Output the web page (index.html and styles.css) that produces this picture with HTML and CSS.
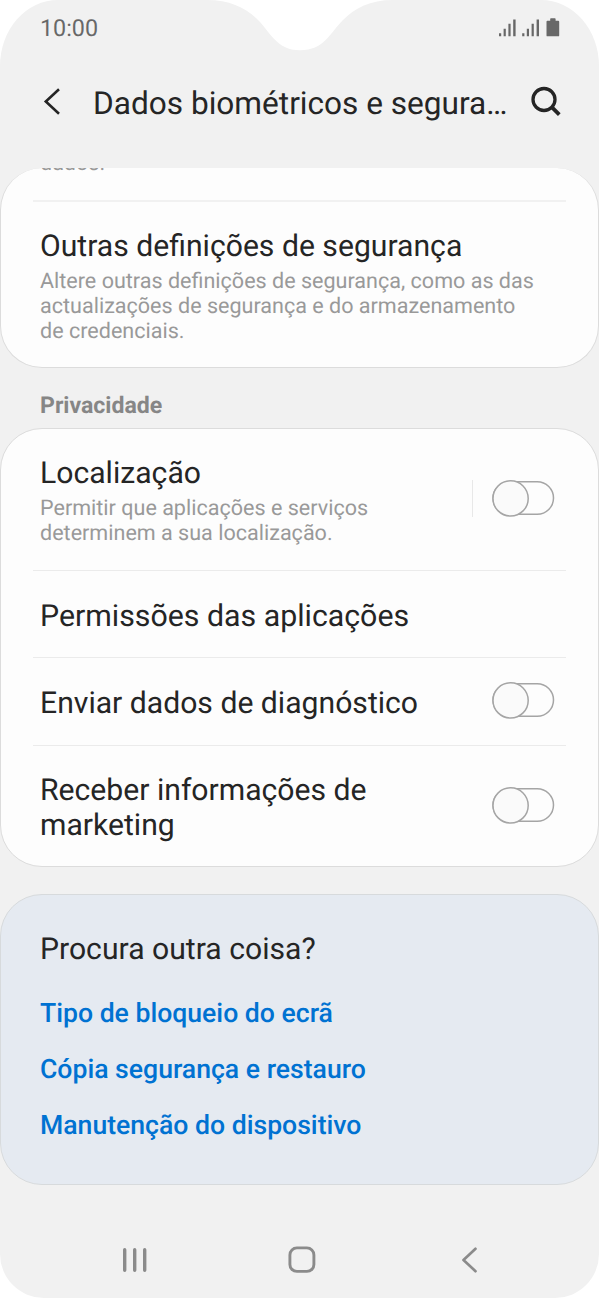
FILE: index.html
```html
<!DOCTYPE html>
<html lang="pt">
<head>
<meta charset="utf-8">
<title>Dados biométricos e segurança</title>
<link rel="stylesheet" href="styles.css">
</head>
<body>
<div class="phone">
  <svg class="notch" width="190" height="52" viewBox="0 0 190 52"><path d="M0 0C22 0 37 7 49 18C63 31 69 50.300 93 50.300C117 50.300 123 33 136 20C148 8 163 0 186 0Z" fill="#fff"/></svg>
  <div class="status">
    <span class="clock">10:00</span>
    <svg class="signals" width="62" height="20" viewBox="0 0 62 20" fill="#686868">
      <path d="M0 15.200h2.200v3H0zM4.600 10.700h2.200v7.500h-2.200zM9.400 5.800h2.200v12.400h-2.200zM14.200 1.400h2.400v16.800h-2.400zM23.200 15.200h2.200v3h-2.200zM27.800 10.700h2.200v7.500h-2.200zM32.600 5.800h2.200v12.400h-2.200zM37.600 1.400h2.400v16.800h-2.400z"/>
      <path d="M48.400 2.800h2.800V1q0-.7.7-.7h4q.7 0 .7.7v1.800h2.700q.9 0 .9.9v13.700q0 .9-.9.9H48.400q-.9 0-.9-.9V3.700q0-.9.9-.9z"/>
    </svg>
  </div>
  <header class="header">
    <svg class="back" width="20" height="30" viewBox="0 0 20 30"><path d="M16 2.300L2.800 14.500L16 26.700" fill="none" stroke="#252525" stroke-width="2.600"/></svg>
    <h1 class="heading">Dados biométricos e segura…</h1>
    <svg class="search" width="32" height="32" viewBox="0 0 32 32" fill="none" stroke="#252525"><circle cx="14" cy="13.500" r="11" stroke-width="3.300"/><path d="M21.800 21.200L29.300 28.700" stroke-width="3.800"/></svg>
  </header>
  <main class="content">
    <section class="card card-top">
      <div class="clipped"><p class="desc">dados.</p></div>
      <div class="row row-security">
        <div><h2 class="label">Outras definições de segurança</h2>
        <p class="desc">Altere outras definições de segurança, como as das<br>actualizações de segurança e do armazenamento<br>de credenciais.</p></div>
      </div>
    </section>
    <h3 class="section-title">Privacidade</h3>
    <section class="card">
      <div class="row row-location">
        <div><h2 class="label">Localização</h2>
        <p class="desc">Permitir que aplicações e serviços<br>determinem a sua localização.</p></div>
        <div class="control divided"><svg class="switch" width="63" height="37" viewBox="0 0 63 37"><rect class="track" x="1" y="1.700" width="60.500" height="32.600" rx="16.300"/><circle class="knob" cx="18.600" cy="18.400" r="17.600"/></svg></div>
      </div>
      <div class="row row-permissions"><h2 class="label">Permissões das aplicações</h2></div>
      <div class="row row-diagnostics"><h2 class="label">Enviar dados de diagnóstico</h2><div class="control"><svg class="switch" width="63" height="37" viewBox="0 0 63 37"><rect class="track" x="1" y="1.700" width="60.500" height="32.600" rx="16.300"/><circle class="knob" cx="18.600" cy="18.400" r="17.600"/></svg></div></div>
      <div class="row row-marketing"><h2 class="label">Receber informações de<br>marketing</h2><div class="control"><svg class="switch" width="63" height="37" viewBox="0 0 63 37"><rect class="track" x="1" y="1.700" width="60.500" height="32.600" rx="16.300"/><circle class="knob" cx="18.600" cy="18.400" r="17.600"/></svg></div></div>
    </section>
    <section class="card suggestions">
      <h2 class="label">Procura outra coisa?</h2>
      <a class="link">Tipo de bloqueio do ecrã</a>
      <a class="link">Cópia segurança e restauro</a>
      <a class="link">Manutenção do dispositivo</a>
    </section>
  </main>
  <nav class="nav">
    <svg width="28" height="28" viewBox="0 0 28 28" stroke="#8b8b8b" stroke-width="3.400" stroke-linecap="round"><path d="M3.700 3.800V24.200M13.700 3.800V24.200M23.700 3.800V24.200"/></svg>
    <svg class="home" width="28" height="28" viewBox="0 0 28 28"><rect x="1.900" y="1.900" width="24" height="23.500" rx="7" fill="none" stroke="#8b8b8b" stroke-width="2.900"/></svg>
    <svg width="20" height="28" viewBox="0 0 20 28"><path d="M15.500 2.800L3.500 14L15.500 25.200" fill="none" stroke="#8b8b8b" stroke-width="2.700" stroke-linecap="round" stroke-linejoin="round"/></svg>
  </nav>
</div>
</body>
</html>
```
FILE: styles.css
```css
* { box-sizing: border-box; margin: 0; padding: 0; }
body { background: #fff; font-family: Roboto, sans-serif; color: #252525; text-rendering: geometricPrecision; }
svg { display: block; flex: none; }
.phone { position: relative; width: 599px; height: 1298px; background: #f1f1f1; border-radius: 58px 58px 44px 44px / 66px 66px 44px 44px; overflow: hidden; display: flex; flex-direction: column; }
.notch { position: absolute; left: 207px; top: 0; }
.status { height: 56px; padding: 0 38px 0 40px; display: flex; justify-content: space-between; align-items: center; }
.clock { font-size: 23.300px; line-height: 28px; color: #686868; }
.header { height: 112px; padding: 0 37px 0 43px; display: flex; align-items: flex-start; }
.back { margin-top: 31px; }
.heading { margin: 29px 0 0 30px; font-size: 31.600px; line-height: 38px; font-weight: 400; white-space: nowrap; }
.search { margin: 30px 0 0 auto; }
.content { flex: none; height: 1017px; }
.card { background: #fdfdfd; border: 1px solid #dcdcdc; border-radius: 42px; overflow: hidden; }
.card-top { height: 200px; border-top: 0; }
.clipped { height: 32px; display: flex; align-items: flex-end; padding: 0 39px 23px; }
.row { position: relative; display: flex; justify-content: space-between; padding: 0 43px 0 39px; }
.row::before { content: ""; position: absolute; left: 32px; right: 32px; top: 0; height: 1px; background: #ebebeb; }
.card-top .row::before { height: 2px; background: #f1f1f1; }
.row-location::before { display: none; }
.label { font-size: 30.150px; line-height: 35px; font-weight: 400; }
.desc { font-size: 21.550px; line-height: 24.800px; color: #999; white-space: nowrap; }
.label + .desc { margin-top: 6px; }
.row-security { padding-top: 29px; height: 167px; }
.section-title { height: 60px; padding: 24px 40px 0; font-size: 23.100px; line-height: 28px; font-weight: 700; color: #868686; }
.row-location { height: 141px; padding-top: 27px; }
.row-permissions { height: 87px; padding-top: 29px; }
.row-permissions .label { font-size: 30.300px; }
.row-diagnostics { height: 88px; padding-top: 29px; }
.row-marketing { height: 121px; padding-top: 28px; }
.control { height: 37px; display: flex; align-items: center; }
.row-location .control { margin-top: 24px; }
.row-diagnostics .control { margin-top: -4px; }
.row-marketing .control { margin-top: 14px; }
.divided { border-left: 1px solid #e8e8e8; padding-left: 19px; }
.track { fill: none; stroke: #a5a5a5; stroke-width: 1.500; }
.knob { fill: #fafafa; stroke: #a5a5a5; stroke-width: 1.500; }
.suggestions { margin-top: 27px; height: 291px; padding: 37px 39px; background: #e5eaf1; border-color: #d7dadc; display: flex; flex-direction: column; }
.link { font-size: 26.600px; line-height: 32px; margin-top: 24px; font-weight: 500; color: #0072d2; }
.label + .link { margin-top: 31px; }
.nav { flex: 1; display: flex; align-items: flex-start; justify-content: space-between; padding: 61px 119px 0 121px; }
.home { margin-right: 6px; }
```
